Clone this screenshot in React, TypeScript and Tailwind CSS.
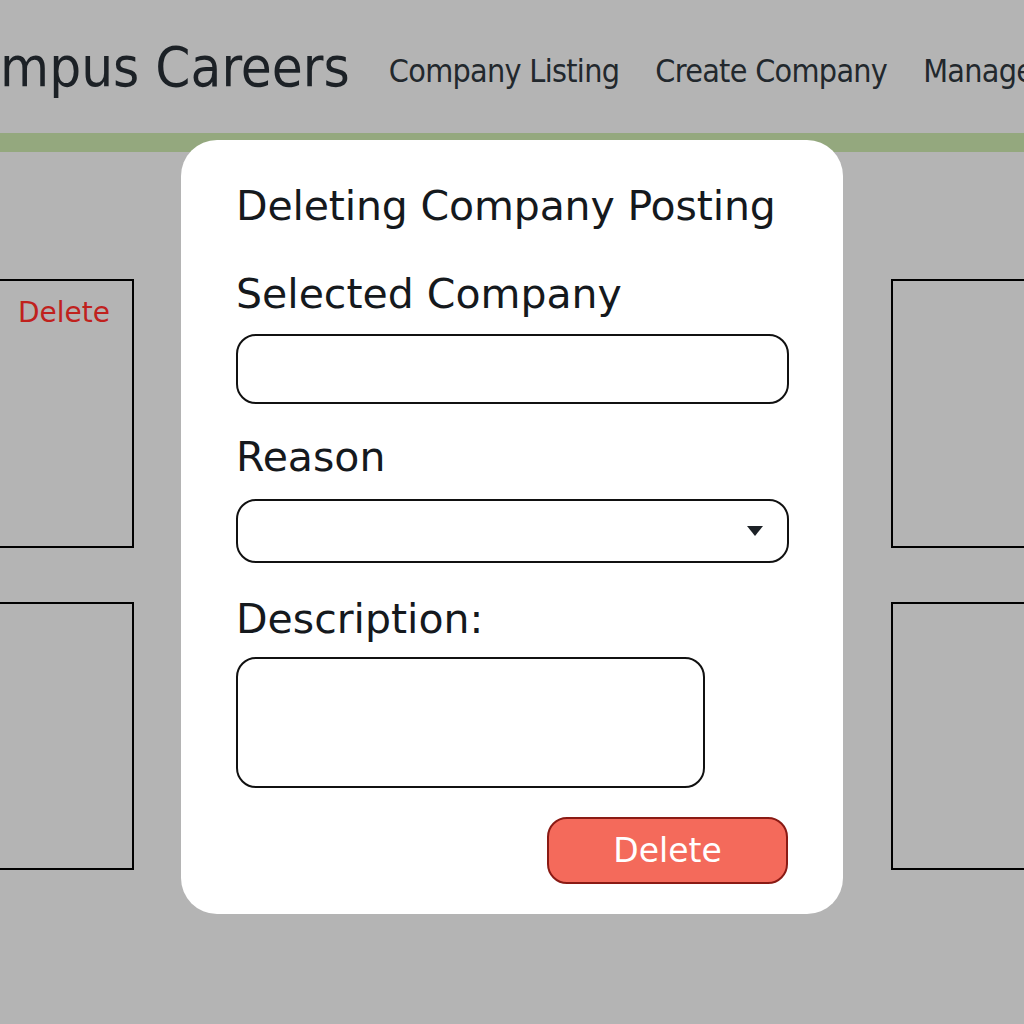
import React from "react";

const font = { fontFamily: '"DejaVu Sans", "Noto Sans", sans-serif' };
const condensed = { fontFamily: '"DejaVu Sans Condensed", "DejaVu Sans", sans-serif', fontStretch: "condensed" as const };

export default function App() {
  return (
    <div className="relative w-[1024px] h-[1024px] overflow-hidden bg-[#b4b4b4]" style={font}>
      <header className="h-[133px] flex items-center whitespace-nowrap" style={condensed}>
        <div className="ml-[-66px] text-[56px] text-[#1c2126] leading-none">Campus Careers</div>
        <nav className="flex items-center gap-[36px] ml-[39px] mt-[8px] text-[32px] tracking-[-0.7px] text-[#22282d] leading-none">
          <span>Company Listing</span>
          <span>Create Company</span>
          <span>Manage Companies</span>
        </nav>
      </header>
      <div className="h-[19px] bg-[#94a87e]" />
      <main className="pt-[127px] flex flex-col gap-[54px]">
        <div className="flex justify-between h-[269px]">
          <div className="ml-[-166px] w-[300px] border-2 border-black relative">
            <span className="absolute right-[22px] top-[11px] text-[28px] text-[#c0211d]">Delete</span>
          </div>
          <div className="mr-[-167px] w-[300px] border-2 border-black" />
        </div>
        <div className="flex justify-between h-[268px]">
          <div className="ml-[-166px] w-[300px] border-2 border-black" />
          <div className="mr-[-167px] w-[300px] border-2 border-black" />
        </div>
      </main>
      <div className="absolute left-[181px] top-[140px] w-[662px] h-[774px] bg-white rounded-[36px] px-[55px] pt-[38px] flex flex-col text-[#15191d]">
        <h2 className="text-[41px] tracking-[-0.15px] leading-[56px]">Deleting Company Posting</h2>
        <label className="mt-[38px] text-[41px] leading-[44px]">Selected Company</label>
        <div className="mt-[18px] h-[70px] w-[553px] border-2 border-[#111] rounded-[20px]" />
        <label className="mt-[31px] text-[41px] leading-[44px]">Reason</label>
        <div className="mt-[20px] h-[64px] w-[553px] border-2 border-[#111] rounded-[20px] flex items-center justify-end pr-[24px]">
          <svg width="16" height="10" viewBox="0 0 16 10"><path d="M0 0 H16 L8 10 Z" fill="#1c2126" /></svg>
        </div>
        <label className="mt-[34px] text-[41px] leading-[44px]">Description:</label>
        <div className="mt-[16px] h-[131px] w-[469px] border-2 border-[#111] rounded-[20px]" />
        <div className="mt-[29px] flex justify-end">
          <button className="w-[241px] h-[67px] bg-[#f46a5b] border-2 border-[#8a1a14] rounded-[20px] text-white text-[33px] leading-none">Delete</button>
        </div>
      </div>
    </div>
  );
}
